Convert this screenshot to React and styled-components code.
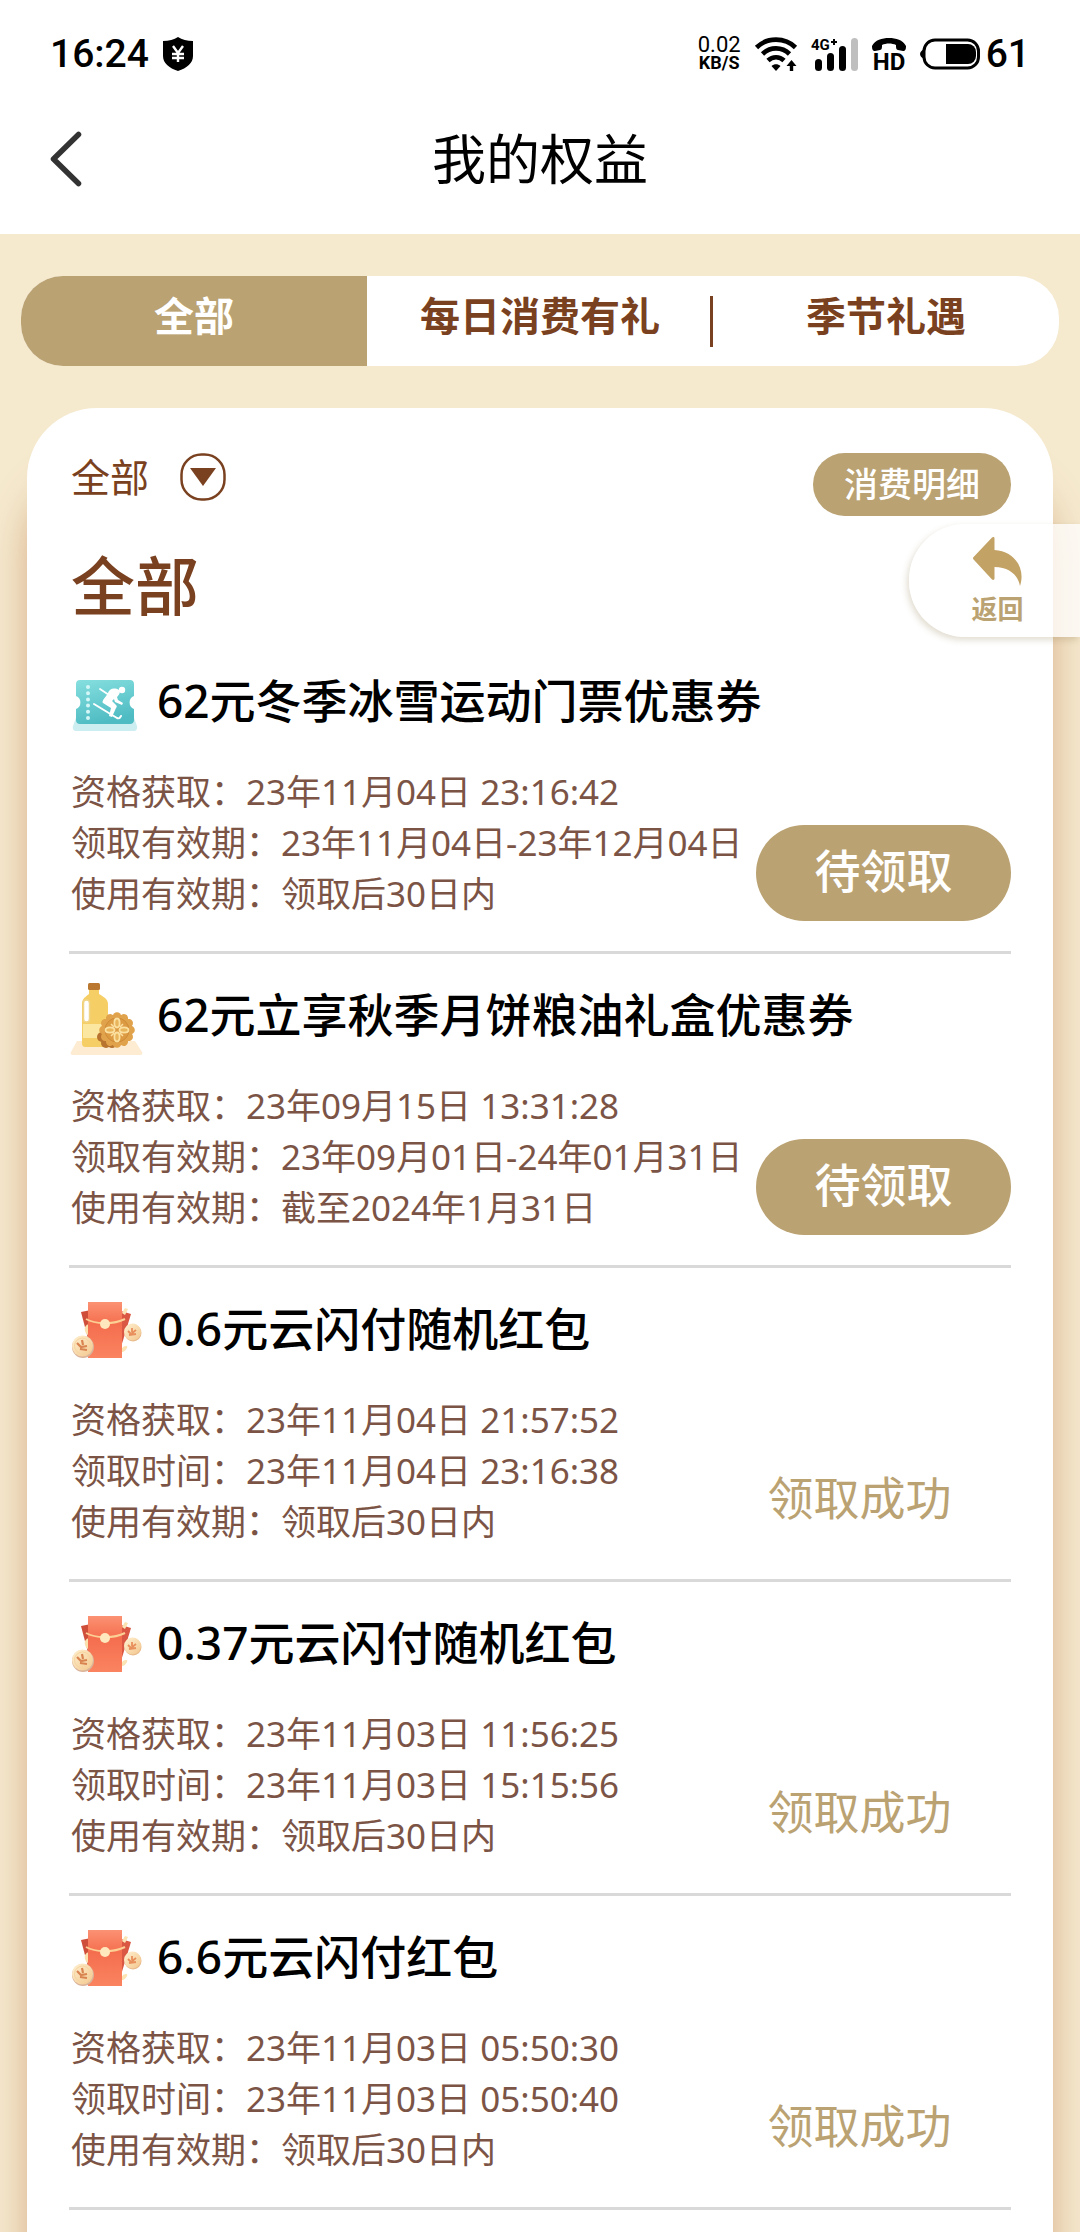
import React from "react";
import styled, { createGlobalStyle } from "styled-components";

const colors = {
  gold: "#baa272",
  brown: "#7a4120",
  detail: "#7b5446",
  sand: "#f5e9ce",
  line: "#d9d9d9",
};

const GlobalStyle = createGlobalStyle`
  * {
    box-sizing: border-box;
  }
  body {
    margin: 0;
    background: ${colors.sand};
    font-family: "Noto Sans", "Noto Sans CJK SC", sans-serif;
    color: #000;
  }
  h1, h2, h3, p, ul {
    margin: 0;
    padding: 0;
  }
  button, select {
    font-family: inherit;
    border: 0;
    padding: 0;
    cursor: pointer;
  }
  svg {
    flex: none;
    overflow: visible;
  }
`;

const tabs = ["全部", "每日消费有礼", "季节礼遇"];

const benefits = [
  {
    icon: "ticket",
    title: "62元冬季冰雪运动门票优惠券",
    lines: [
      "资格获取：23年11月04日 23:16:42",
      "领取有效期：23年11月04日-23年12月04日",
      "使用有效期：领取后30日内",
    ],
    claimed: false,
  },
  {
    icon: "oil",
    title: "62元立享秋季月饼粮油礼盒优惠券",
    lines: [
      "资格获取：23年09月15日 13:31:28",
      "领取有效期：23年09月01日-24年01月31日",
      "使用有效期：截至2024年1月31日",
    ],
    claimed: false,
  },
  {
    icon: "packet",
    title: "0.6元云闪付随机红包",
    lines: [
      "资格获取：23年11月04日 21:57:52",
      "领取时间：23年11月04日 23:16:38",
      "使用有效期：领取后30日内",
    ],
    claimed: true,
  },
  {
    icon: "packet",
    title: "0.37元云闪付随机红包",
    lines: [
      "资格获取：23年11月03日 11:56:25",
      "领取时间：23年11月03日 15:15:56",
      "使用有效期：领取后30日内",
    ],
    claimed: true,
  },
  {
    icon: "packet",
    title: "6.6元云闪付红包",
    lines: [
      "资格获取：23年11月03日 05:50:30",
      "领取时间：23年11月03日 05:50:40",
      "使用有效期：领取后30日内",
    ],
    claimed: true,
  },
];

const ShieldIcon = () => (
  <svg width="30" height="34" viewBox="0 0 30 34">
    <path d="M15 0c4 2.600 9 4 15 4v15c0 7-6 12-15 15C6 31 0 26 0 19V4c6 0 11-1.400 15-4z" />
    <path
      d="M10 9l5 7 5-7M9 17h12M9 21h12M15 16v9"
      fill="none"
      stroke="#fff"
      strokeWidth="2.400"
    />
  </svg>
);

const WifiIcon = () => (
  <svg width="42" height="34" viewBox="0 0 42 34">
    <g fill="none" stroke="#000" strokeWidth="4.600">
      <path d="M1.500 10.500C12 0 30 0 40.500 10.500" />
      <path d="M7.500 17C15 9.500 27 9.500 34.500 17" />
      <path d="M13 23.500c4.500-4.400 11.500-4.400 16 0" />
    </g>
    <path d="M16.500 29c2.600-2.400 6.400-2.400 9 0L21 34z" />
    <path d="M36.500 23l5 6h-3.300v5h-3.400v-5h-3.300z" />
  </svg>
);

const SignalIcon = () => (
  <svg width="47" height="33" viewBox="0 0 47 33">
    <rect x="4" y="21" width="7" height="12" rx="3.500" />
    <rect x="16" y="15" width="7" height="18" rx="3.500" />
    <rect x="28" y="8" width="7" height="25" rx="3.500" />
    <rect x="40" y="0" width="7" height="33" rx="3.500" fill="#bfbfbf" />
    <text x="0" y="12" fontFamily="Roboto" fontWeight="700" fontSize="15">
      4G
    </text>
    <path d="M20 4h6M23 1v6" stroke="#000" strokeWidth="2" />
  </svg>
);

const HdIcon = () => (
  <svg width="34" height="33" viewBox="0 0 34 33">
    <path d="M0 8C3 2 10 0 17 0s14 2 17 8c0 4-1 5-3 5l-5-1c-2-.5-2-2-2-5-4-2-10-2-14 0 0 3 0 4.500-2 5l-5 1c-2 0-3-1-3-5z" />
    <text
      x="17"
      y="32"
      textAnchor="middle"
      fontFamily="Roboto"
      fontWeight="700"
      fontSize="24"
    >
      HD
    </text>
  </svg>
);

const BatteryIcon = () => (
  <svg width="60" height="32" viewBox="0 0 60 32">
    <rect
      x="4"
      y="2"
      width="54.500"
      height="28"
      rx="11"
      fill="none"
      stroke="#000"
      strokeWidth="3"
    />
    <path d="M4 11c-2 1-4 3-4 5s2 4 4 5z" />
    <path d="M26 6h22a8 8 0 0 1 8 8v4a8 8 0 0 1-8 8H26z" />
  </svg>
);

const BackIcon = () => (
  <svg width="32" height="56" viewBox="0 0 32 56">
    <path
      d="M28.500 3.500L3.500 28l25 24.500"
      fill="none"
      stroke="#333"
      strokeWidth="5.500"
      strokeLinecap="round"
      strokeLinejoin="round"
    />
  </svg>
);

const DropdownIcon = () => (
  <svg width="46" height="48" viewBox="0 0 46 48">
    <rect
      x="1.500"
      y="1.500"
      width="43"
      height="45"
      rx="20"
      fill="none"
      stroke={colors.brown}
      strokeWidth="2.500"
    />
    <path d="M10 15h26L23 33z" fill={colors.brown} />
  </svg>
);

const ReturnIcon = () => (
  <svg width="50" height="50" viewBox="0 0 50 50">
    <path
      d="M.6 20 18.800.8C20-.4 21.500 0 21.500 1.500V13C41 14 53 31 47 49 45 38 36 30 21.500 30v11.500c0 1.500-1.500 2-2.700.8L.6 22.500c-.8-.8-.8-1.700 0-2.500z"
      fill="#c3a265"
    />
  </svg>
);

const TicketIcon = () => (
  <svg width="72" height="72" viewBox="0 0 72 72">
    <defs>
      <linearGradient id="ticket" x1="0" y1="0" x2="0.300" y2="1">
        <stop offset="0" stopColor="#86dfdf" />
        <stop offset="1" stopColor="#4fbcc3" />
      </linearGradient>
    </defs>
    <path d="M6 46h56l4 11c.6 3-1 5-3 5H5c-2 0-4-2-3-5z" fill="#cdeef0" />
    <path
      d="M9 11h50c2.500 0 4 1.500 4 4v12a7 7 0 0 0 0 13v11c0 2.500-1.500 4-4 4H9c-2.500 0-4-1.500-4-4V40a7 7 0 0 0 0-13V15c0-2.500 1.500-4 4-4z"
      fill="url(#ticket)"
    />
    <path
      d="M17 18v31"
      stroke="#d4f6f6"
      strokeWidth="4"
      strokeLinecap="round"
      strokeDasharray="0 6.200"
    />
    <circle cx="51" cy="21" r="3.200" fill="#fff" />
    <path
      d="M37 24c1-4 6-6 11-3 2 2 0 5-2 7l1 3 5 3-1 2-7-3-1-3-2 2 4 4c1 1 1 2 0 3l-4 9-3-1 2-8-8-5c-2-2 3-6 5-10z"
      fill="#fff"
    />
    <g fill="none" stroke="#fff" strokeLinecap="round" strokeLinejoin="round">
      <path d="M38 26l-9-6" strokeWidth="1.800" />
      <path d="M23 35l23 14c2 1 3 0 4-2" strokeWidth="2" />
    </g>
  </svg>
);

const OilIcon = () => {
  const petals = [0, 30, 60, 90, 120, 150, 180, 210, 240, 270, 300, 330];
  return (
    <svg width="72" height="72" viewBox="0 0 72 72">
      <path d="M6 58h58l7 11c1 2 0 3-2 3H2c-2 0-3-1-2-3z" fill="#fdebd2" />
      <rect x="17" y="0" width="12" height="7" rx="1.500" fill="#b9772f" />
      <path
        d="M18 7h10v4c5 3 9 5 9 10v39c0 3-1 4-4 4H15c-3 0-4-1-4-4V21c0-5 3-7 7-10z"
        fill="#f5cf66"
      />
      <path d="M12 41h24v14H12z" fill="#fbe7a0" />
      <rect
        x="12.500"
        y="17"
        width="6"
        height="22"
        rx="3"
        fill="#fff"
        stroke="#f0d48a"
        strokeWidth="1.500"
      />
      <g fill="#b8742f">
        <circle cx="31" cy="54" r="5" />
        <circle cx="35" cy="60" r="5" />
        <circle cx="41" cy="61" r="4" />
      </g>
      <g fill="#e0a24b">
        <circle cx="46" cy="47" r="15" />
        {petals.map((a) => (
          <circle
            key={a}
            cx="46"
            cy="33.500"
            r="4.300"
            transform={`rotate(${a} 46 47)`}
          />
        ))}
      </g>
      <circle
        cx="46"
        cy="47"
        r="12"
        fill="#dc9a42"
        stroke="#cf8b38"
        strokeWidth="1"
      />
      <g fill="#e8b45c" stroke="#fbe0a0" strokeWidth="1.800">
        {[0, 90, 180, 270].map((a) => (
          <ellipse
            key={a}
            cx="46"
            cy="40"
            rx="2.600"
            ry="4.500"
            transform={`rotate(${a} 46 47)`}
          />
        ))}
      </g>
      <path
        d="M40 41l3 3M52 41l-3 3M40 53l3-3M52 53l-3-3"
        stroke="#fbe0a0"
        strokeWidth="1.500"
      />
    </svg>
  );
};

const PacketIcon = () => (
  <svg width="72" height="72" viewBox="0 0 72 72">
    <defs>
      <linearGradient id="packet" x1="0" y1="0" x2="0" y2="1">
        <stop offset="0" stopColor="#fb9273" />
        <stop offset="0.400" stopColor="#f46e4e" />
        <stop offset="1" stopColor="#fb8460" />
      </linearGradient>
      <linearGradient id="coin" x1="0" y1="0" x2="1" y2="1">
        <stop offset="0" stopColor="#fff1d2" />
        <stop offset="1" stopColor="#f3c68c" />
      </linearGradient>
    </defs>
    <path d="M10 15l10-2v40z" fill="#cf4e3a" />
    <path d="M60 17l-10-3v36z" fill="#da5843" />
    <path d="M14 30c3-4 5-3 5 0l-1 9c-3-2-5-5-4-9z" fill="#fbe0ae" />
    <path d="M54 11l3 1-3 6-3-2zM52 50c4-2 5-1 4 1-2 4-5 5-7 3z" fill="#fbe3b4" />
    <path d="M17 5h34v56H17z" fill="url(#packet)" />
    <path
      d="M15 22c9 5 27 6 39 0"
      fill="none"
      stroke="#fccf94"
      strokeWidth="2"
    />
    <circle cx="34" cy="27" r="5" fill="#ffe8bd" />
    <circle cx="62" cy="36" r="8.500" fill="#e7b98a" />
    <circle cx="61.500" cy="35" r="8.500" fill="url(#coin)" />
    <path
      d="M57 34l3 3 5-4M58 38l7-1M61 31v4"
      stroke="#e88f5c"
      strokeWidth="1.800"
      fill="none"
    />
    <circle cx="12" cy="50" r="11" fill="#d9b39a" />
    <circle cx="11.500" cy="49" r="10.500" fill="url(#coin)" />
    <circle
      cx="11.500"
      cy="49"
      r="8"
      fill="none"
      stroke="#f6d5a0"
      strokeWidth="1"
    />
    <path
      d="M6 46l4 4 6-1M9 52l7 1M11 43l1 5"
      stroke="#d98450"
      strokeWidth="2.200"
      fill="none"
    />
  </svg>
);

const icons = { ticket: TicketIcon, oil: OilIcon, packet: PacketIcon };

const BenefitItem = ({ icon, title, lines, claimed }) => {
  const Icon = icons[icon];
  return (
    <Item>
      <ItemHead>
        <Icon />
        <ItemTitle>{title}</ItemTitle>
      </ItemHead>
      <ItemBody>
        <Details>
          {lines.map((line) => (
            <DetailLine key={line}>{line}</DetailLine>
          ))}
        </Details>
        {claimed ? (
          <ClaimedText>领取成功</ClaimedText>
        ) : (
          <ClaimButton type="button">待领取</ClaimButton>
        )}
      </ItemBody>
    </Item>
  );
};

const App = () => (
  <Page>
    <GlobalStyle />
    <Header>
      <StatusBar>
        <StatusGroup>
          <Clock>16:24</Clock>
          <ShieldIcon />
        </StatusGroup>
        <StatusGroup>
          <NetSpeed>
            <span>0.02</span>
            <SpeedUnit>KB/S</SpeedUnit>
          </NetSpeed>
          <WifiIcon />
          <SignalIcon />
          <HdIcon />
          <Battery>
            <BatteryIcon />
            <Clock>61</Clock>
          </Battery>
        </StatusGroup>
      </StatusBar>
      <NavBar>
        <BackButton type="button" aria-label="返回">
          <BackIcon />
        </BackButton>
        <PageTitle>我的权益</PageTitle>
      </NavBar>
    </Header>

    <Tabs>
      {tabs.map((tab, i) => (
        <Tab key={tab} type="button" $active={i === 0} $divider={i === 1}>
          {tab}
        </Tab>
      ))}
    </Tabs>

    <Card>
      <FilterRow>
        <FilterLabel>
          <FilterSelect aria-label="全部">
            <option>全部</option>
          </FilterSelect>
          <DropdownIcon />
        </FilterLabel>
        <RecordsButton type="button">消费明细</RecordsButton>
      </FilterRow>
      <SectionTitle>全部</SectionTitle>
      <List>
        {benefits.map((benefit) => (
          <BenefitItem key={benefit.title} {...benefit} />
        ))}
      </List>
    </Card>

    <FloatingReturn type="button">
      <ReturnIcon />
      返回
    </FloatingReturn>
  </Page>
);

const Page = styled.div`
  position: relative;
  display: flex;
  flex-direction: column;
  min-height: 100vh;
  overflow: hidden;
`;

const Header = styled.header`
  background: #fff;
`;

const StatusBar = styled.div`
  display: flex;
  justify-content: space-between;
  height: 84px;
  padding: 24px 50px 0;
`;

const StatusGroup = styled.div`
  display: flex;
  align-items: center;
  gap: 14px;
`;

const Clock = styled.span`
  font: 500 39px/60px Roboto, sans-serif;
`;

const NetSpeed = styled.div`
  display: flex;
  flex-direction: column;
  align-items: center;
  font: 400 22px/18px Roboto, sans-serif;
`;

const SpeedUnit = styled.span`
  font-size: 18px;
  font-weight: 700;
`;

const Battery = styled.div`
  display: flex;
  align-items: center;
  gap: 6px;
`;

const NavBar = styled.div`
  display: grid;
  grid-template-columns: 1fr auto 1fr;
  align-items: center;
  height: 150px;
  padding: 0 50px;
`;

const BackButton = styled.button`
  display: flex;
  justify-self: start;
  background: none;
`;

const PageTitle = styled.h1`
  font-size: 54px;
  font-weight: 400;
  line-height: 80px;
`;

const Tabs = styled.nav`
  display: grid;
  grid-template-columns: repeat(3, 1fr);
  margin: 42px 21px;
  border-radius: 42px;
  background: #fff;
  overflow: hidden;
`;

const Tab = styled.button`
  display: flex;
  align-items: center;
  justify-content: center;
  height: 90px;
  padding-bottom: 10px;
  font-size: 40px;
  font-weight: 700;
  line-height: 60px;
  color: ${({ $active }) => ($active ? "#fff" : colors.brown)};
  background: ${({ $active, $divider }) =>
    $active
      ? colors.gold
      : $divider
        ? `linear-gradient(${colors.brown}, ${colors.brown}) right center / 3px 51px no-repeat`
        : "none"};
`;

const Card = styled.main`
  flex: 1;
  margin: 0 27px;
  padding: 45px 42px 0;
  border-radius: 70px 70px 0 0;
  background: #fff;
  box-shadow: 0 70px 36px rgba(190, 120, 70, 0.5);
`;

const FilterRow = styled.div`
  display: flex;
  justify-content: space-between;
  align-items: flex-start;
  padding-left: 2px;
`;

const FilterLabel = styled.label`
  display: flex;
  align-items: center;
  gap: 28px;
`;

const FilterSelect = styled.select`
  appearance: none;
  width: 81px;
  height: 48px;
  background: none;
  color: ${colors.brown};
  font-size: 39px;
  line-height: 48px;
`;

const RecordsButton = styled.button`
  width: 198px;
  height: 63px;
  padding-bottom: 2px;
  border-radius: 32px;
  background: ${colors.gold};
  color: #fff;
  font-size: 34px;
  font-weight: 500;
  line-height: 48px;
`;

const SectionTitle = styled.h2`
  margin: 34px 0 18px;
  padding-left: 2px;
  color: ${colors.brown};
  font-size: 64px;
  font-weight: 500;
  line-height: 72px;
`;

const List = styled.ul`
  list-style: none;
`;

const Item = styled.li`
  padding: 29px 0 30px;
  border-bottom: 3px solid ${colors.line};
`;

const ItemHead = styled.div`
  display: flex;
  align-items: flex-start;
  gap: 14px;
  margin-bottom: 25px;
  padding-left: 2px;
`;

const ItemTitle = styled.h3`
  font-size: 46px;
  font-weight: 500;
  line-height: 62px;
  white-space: nowrap;
`;

const ItemBody = styled.div`
  display: flex;
  align-items: flex-end;
  justify-content: space-between;
`;

const Details = styled.div`
  padding: 0 0 2px 2px;
`;

const DetailLine = styled.p`
  color: ${colors.detail};
  font-size: 35px;
  line-height: 51px;
  white-space: nowrap;
`;

const ClaimButton = styled.button`
  width: 255px;
  height: 96px;
  padding-bottom: 6px;
  border-radius: 48px;
  background: ${colors.gold};
  color: #fff;
  font-size: 46px;
  font-weight: 500;
  line-height: 60px;
`;

const ClaimedText = styled.p`
  width: 255px;
  height: 96px;
  padding-right: 48px;
  color: ${colors.gold};
  font-size: 46px;
  line-height: 88px;
  text-align: center;
`;

/* sits over the right edge of the card */
const FloatingReturn = styled.button`
  position: absolute;
  top: 524px;
  right: 0;
  display: flex;
  flex-direction: column;
  align-items: center;
  gap: 2px;
  width: 171px;
  height: 113px;
  padding: 13px 0 0 6px;
  border-radius: 56px 0 0 56px;
  background: rgba(255, 255, 255, 0.75);
  box-shadow: -2px 3px 6px rgba(140, 120, 70, 0.25);
  color: ${colors.gold};
  font-size: 26px;
  font-weight: 700;
  line-height: 40px;
`;

export default App;
